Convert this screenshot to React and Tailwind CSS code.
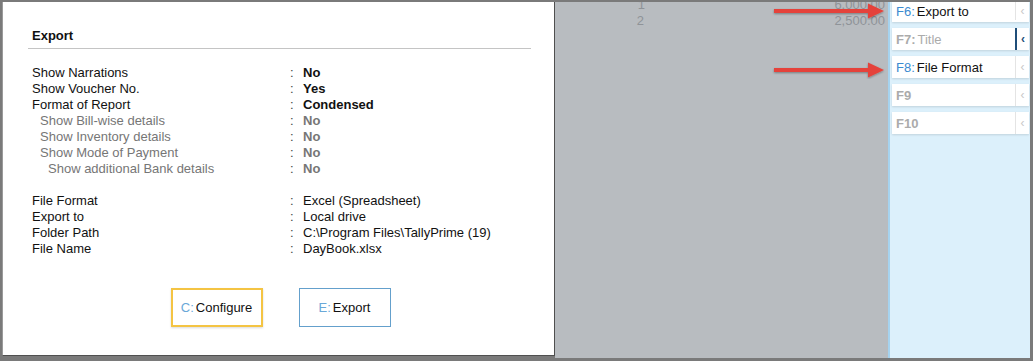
import React from "react";

const rows = [
  { label: "Show Narrations", value: "No", indent: 0, gray: false, bold: true },
  { label: "Show Voucher No.", value: "Yes", indent: 0, gray: false, bold: true },
  { label: "Format of Report", value: "Condensed", indent: 0, gray: false, bold: true },
  { label: "Show Bill-wise details", value: "No", indent: 1, gray: true, bold: true },
  { label: "Show Inventory details", value: "No", indent: 1, gray: true, bold: true },
  { label: "Show Mode of Payment", value: "No", indent: 1, gray: true, bold: true },
  { label: "Show additional Bank details", value: "No", indent: 2, gray: true, bold: true },
  null,
  { label: "File Format", value: "Excel (Spreadsheet)", indent: 0, gray: false, bold: false },
  { label: "Export to", value: "Local drive", indent: 0, gray: false, bold: false },
  { label: "Folder Path", value: "C:\\Program Files\\TallyPrime (19)", indent: 0, gray: false, bold: false },
  { label: "File Name", value: "DayBook.xlsx", indent: 0, gray: false, bold: false },
];

function Row({ r }) {
  if (!r) return <div className="h-[16px]" />;
  const indentCls = r.indent === 2 ? "pl-[16px]" : r.indent === 1 ? "pl-[8px]" : "pl-0";
  const color = r.gray ? "text-[#767676]" : "text-[#111]";
  return (
    <div className={`flex h-[16px] items-center leading-[16px] ${color}`}>
      <div className={`w-[258px] ${indentCls}`}>{r.label}</div>
      <div className="w-[13px] text-[#444]">:</div>
      <div className={r.bold ? "font-bold" : ""}>{r.value}</div>
    </div>
  );
}

function SideButton({ fkey, label, first, disabled, selected }) {
  return (
    <div
      className={`flex ${first ? "h-[20px] pb-[2px]" : "h-[22px]"} items-stretch bg-white shadow-[0_1px_2px_rgba(0,0,0,0.12)]`}
    >
      <div className="flex flex-1 items-center pl-[4px] text-[13px] leading-none">
        <span className={disabled ? "font-bold text-[#ababab]" : "text-[#3b8ad0]"}>{fkey}</span>
        {label && (
          <span className={`ml-[2px] ${disabled ? "text-[#ababab]" : "text-[#111]"}`}>{label}</span>
        )}
      </div>
      <div
        className={`flex w-[14px] items-center justify-center text-[12px] ${
          selected ? "border-l-2 border-[#1f4e79] font-bold text-[#1f4e79]" : "border-l border-[#e4e4e4] text-[#c8c8c8]"
        }`}
      >
        ‹
      </div>
    </div>
  );
}

function Arrow({ top }) {
  return (
    <svg
      className="absolute left-[217px]"
      style={{ top }}
      width="116"
      height="18"
      viewBox="0 0 116 18"
    >
      <defs>
        <filter id="sh" x="-10%" y="-40%" width="120%" height="180%">
          <feDropShadow dx="0" dy="1" stdDeviation="1" floodColor="#000" floodOpacity="0.35" />
        </filter>
      </defs>
      <g filter="url(#sh)">
        <path d="M2 7 L96 7 L96 1.5 L112 9 L96 16.5 L96 11 L2 11 Z" fill="#e5433b" strokeLinejoin="round" />
      </g>
    </svg>
  );
}

export default function App() {
  return (
    <div
      className="flex h-[361px] w-[1033px] bg-[#7a7a7a] pb-[3px] pl-[2px] pr-[3px] pt-[2px]"
      style={{ fontFamily: '"Liberation Sans", Arial, sans-serif' }}
    >
      {/* white dialog panel */}
      <div className="relative z-10 flex h-[354px] w-[553px] flex-col border-b border-l border-r border-b-[#4f4f4f] border-l-[#9a9a9a] border-r-[#4f4f4f] bg-white pl-[25px] pr-[23px] pt-[26px] text-[13px]">
        <div className="border-b border-[#c4c4c4] pb-[4px] pl-[4px]">
          <div className="h-[16px] font-bold leading-[16px] text-[#111]">Export</div>
        </div>
        <div className="mt-[16px] pl-[4px]">
          {rows.map((r, i) => (
            <Row key={i} r={r} />
          ))}
        </div>
        <div className="mt-[31px] flex justify-center gap-[36px] pl-[2px]">
          <div className="flex h-[39px] w-[92px] items-center justify-center border-2 border-[#f4c443] shadow-[0_1px_2px_rgba(0,0,0,0.15)]">
            <span className="text-[#6aa8d8]">C:</span>
            <span className="ml-[2px] text-[#111]">Configure</span>
          </div>
          <div className="flex h-[39px] w-[92px] items-center justify-center border border-[#64a0cc]">
            <span className="text-[#6aa8d8]">E:</span>
            <span className="ml-[2px] text-[#111]">Export</span>
          </div>
        </div>
      </div>

      {/* gray background area */}
      <div className="relative h-[356px] w-[333px] overflow-hidden bg-[#b8bcc0] text-[13px] text-[#8f9398]">
        <div className="mt-[-5px] flex flex-col">
          <div className="flex h-[16px] items-center leading-[16px]">
            <div className="w-[90px] text-right">1</div>
            <div className="flex-1 pr-[3px] text-right">6,000.00</div>
          </div>
          <div className="flex h-[16px] items-center leading-[16px]">
            <div className="w-[89px] text-right">2</div>
            <div className="flex-1 pr-[3px] text-right">2,500.00</div>
          </div>
        </div>
        <Arrow top={0} />
        <Arrow top={59} />
      </div>

      {/* right sidebar */}
      <div className="flex h-[356px] w-[142px] flex-col gap-[6px] border-l-2 border-[#a6d3ef] bg-[#dcf0fb] pl-[2px] pr-[1px]">
        <SideButton fkey="F6:" label="Export to" first />
        <SideButton fkey="F7:" label="Title" disabled selected />
        <SideButton fkey="F8:" label="File Format" />
        <SideButton fkey="F9" disabled />
        <SideButton fkey="F10" disabled />
      </div>
    </div>
  );
}
